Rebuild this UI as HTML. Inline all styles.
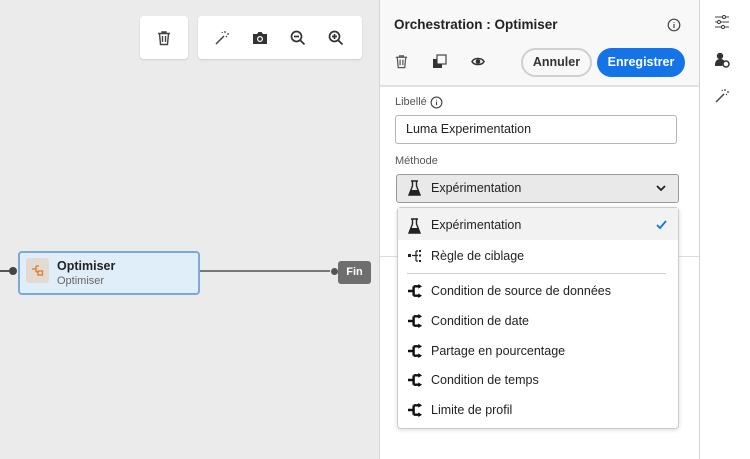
<!DOCTYPE html>
<html><head><style>
*{margin:0;padding:0;box-sizing:border-box}
body{width:750px;height:459px;overflow:hidden;background:#ebebeb;font-family:"Liberation Sans",sans-serif;color:#2c2c2c;position:relative}
.a{position:absolute}
.box{position:absolute;background:#fff;border-radius:4px;box-shadow:0 1px 2px rgba(0,0,0,.12)}
.t{position:absolute;white-space:nowrap}
.item{position:absolute;left:431px;font-size:12.5px;color:#222}
</style></head><body>
<div class="box" style="left:140px;top:16px;width:48px;height:43px"></div>
<div class="box" style="left:198px;top:16px;width:164px;height:43px"></div>
<svg class="a" style="left:156px;top:30px" width="16" height="16" viewBox="0 0 16 16" fill="none" stroke="#444" stroke-width="1.4"><path d="M2 3.5h12M6 3.5V2h4v1.5M3.5 3.5l1 11h7l1-11M6.5 6v6M9.5 6v6"/></svg>
<svg class="a" style="left:214px;top:30px" width="16" height="16" viewBox="0 0 16 16" fill="none" stroke="#444" stroke-width="1.5"><path d="M2 14L10 6"/><path d="M11 1v2M13 4h2M12 6l1 1M8 2l.5 1" stroke-width="1.2"/></svg>
<svg class="a" style="left:252px;top:30px" width="16" height="16" viewBox="0 0 16 16"><path d="M1 4h4l1.5-2h3L11 4h4v10H1z" fill="#333"/><circle cx="8" cy="9" r="3" fill="#fff"/><circle cx="8" cy="9" r="1.8" fill="#333"/></svg>
<svg class="a" style="left:290px;top:30px" width="16" height="16" viewBox="0 0 16 16" fill="none" stroke="#333" stroke-width="1.7"><circle cx="6.5" cy="6.5" r="5"/><path d="M10 10l4.5 4.5M4 6.5h5"/></svg>
<svg class="a" style="left:328px;top:30px" width="16" height="16" viewBox="0 0 16 16" fill="none" stroke="#333" stroke-width="1.7"><circle cx="6.5" cy="6.5" r="5"/><path d="M10 10l4.5 4.5M4 6.5h5M6.5 4v5"/></svg>
<div class="a" style="left:0;top:270px;width:12px;height:1.5px;background:#555"></div>
<div class="a" style="left:199px;top:270px;width:135px;height:1.5px;background:#777"></div>
<div class="a" style="left:18px;top:251px;width:182px;height:44px;background:#e0eefa;border:2px solid #7aa9dd;border-radius:4px"></div>
<div class="a" style="left:9px;top:267px;width:8px;height:8px;border-radius:50%;background:#444"></div>
<div class="a" style="left:26px;top:258px;width:23px;height:25px;background:#e3dbd2;border-radius:3px"></div>
<svg class="a" style="left:31px;top:264px" width="13" height="13" viewBox="0 0 13 13" fill="none" stroke="#e07a2a" stroke-width="1.3"><path d="M1 5h4M5 2v6M5 2h3M5 8h2"/><rect x="7" y="7" width="4.5" height="4" /></svg>
<div class="t" style="left:57px;top:259px;font-size:12.5px;font-weight:bold;color:#222">Optimiser</div>
<div class="t" style="left:57px;top:275px;font-size:11px;color:#666">Optimiser</div>
<div class="a" style="left:330px;top:267px;width:9px;height:9px;border-radius:50%;background:#555;border:1px solid #ebebeb"></div>
<div class="a" style="left:338px;top:261px;width:33px;height:23px;background:#6e6e6e;border-radius:3px;color:#fff;font-size:11px;font-weight:bold;text-align:center;line-height:23px">Fin</div>
<div class="a" style="left:379px;top:0;width:321px;height:459px;background:#fff;border-left:1px solid #d5d5d5"></div>
<div class="a" style="left:380px;top:0;width:320px;height:87px;background:#f8f8f8;border-bottom:2px solid #e1e1e1"></div>
<div class="t" style="left:394px;top:17px;font-size:13.5px;font-weight:bold;color:#222">Orchestration : Optimiser</div>
<svg class="a" style="left:667px;top:18px" width="14" height="14" viewBox="0 0 14 14" fill="none" stroke="#444" stroke-width="1.2"><circle cx="7" cy="7" r="5.8"/><path d="M7 6v4M7 4v.8"/></svg>
<svg class="a" style="left:394px;top:54px" width="15" height="15" viewBox="0 0 16 16" fill="none" stroke="#555" stroke-width="1.3"><path d="M2 3.5h12M6 3.5V2h4v1.5M3.5 3.5l1 11h7l1-11M6.5 6v6M9.5 6v6"/></svg>
<svg class="a" style="left:432px;top:54px" width="15" height="15" viewBox="0 0 15 15"><rect x="5" y="1" width="9" height="9" fill="none" stroke="#444" stroke-width="1.2"/><path d="M1 5h4v5h5v4H1z" fill="#333"/></svg>
<svg class="a" style="left:471px;top:56px" width="14" height="11" viewBox="0 0 14 11" fill="none" stroke="#333" stroke-width="1.5"><path d="M1 5.5C3 1.5 11 1.5 13 5.5C11 9.5 3 9.5 1 5.5z"/><circle cx="7" cy="5.5" r="1.6" fill="#333"/></svg>
<div class="a" style="left:521px;top:48px;width:71px;height:29px;border:2px solid #d0d0d0;border-radius:15px;background:#f8f8f8;font-size:12.5px;font-weight:bold;text-align:center;line-height:25px;color:#333">Annuler</div>
<div class="a" style="left:597px;top:48px;width:88px;height:29px;background:#1473e6;border-radius:15px;font-size:12.5px;font-weight:bold;color:#fff;text-align:center;line-height:29px">Enregistrer</div>
<div class="t" style="left:395px;top:96px;font-size:11px;color:#555">Libellé</div>
<svg class="a" style="left:430px;top:96px" width="13" height="13" viewBox="0 0 14 14" fill="none" stroke="#444" stroke-width="1.2"><circle cx="7" cy="7" r="5.8"/><path d="M7 6v4M7 4v.8"/></svg>
<div class="a" style="left:395px;top:115px;width:282px;height:29px;border:1px solid #b5b5b5;border-radius:3px;background:#fff;font-size:12.5px;padding-left:10px;line-height:27px;color:#222">Luma Experimentation</div>
<div class="t" style="left:395px;top:155px;font-size:11px;color:#555">Méthode</div>
<div class="a" style="left:396px;top:174px;width:283px;height:29px;border:1px solid #999;border-radius:3px;background:#e9e9e9"></div>
<svg class="a" style="left:408px;top:180px" width="13" height="16" viewBox="0 0 13 16"><path d="M3 1h7M4.5 1v5L1 15h11L8.5 6V1" fill="none" stroke="#222" stroke-width="1.4"/><path d="M3 10h7l2 5H1z" fill="#222"/></svg>
<div class="t" style="left:431px;top:181px;font-size:12.5px;color:#222">Expérimentation</div>
<svg class="a" style="left:656px;top:184px" width="10" height="8" viewBox="0 0 10 8" fill="none" stroke="#222" stroke-width="1.8"><path d="M1 2l4 4 4-4"/></svg>
<div class="a" style="left:380px;top:256px;width:320px;height:1px;background:#ddd"></div>
<div class="a" style="left:397px;top:207px;width:282px;height:222px;background:#fff;border:1px solid #ccc;border-radius:4px;box-shadow:0 1px 4px rgba(0,0,0,.15)"></div>
<div class="a" style="left:398px;top:208px;width:280px;height:32px;background:#f2f2f2"></div>
<svg class="a" style="left:408px;top:218px" width="13" height="16" viewBox="0 0 13 16"><path d="M3 1h7M4.5 1v5L1 15h11L8.5 6V1" fill="none" stroke="#222" stroke-width="1.4"/><path d="M3 10h7l2 5H1z" fill="#222"/></svg>
<div class="item" style="top:218px">Expérimentation</div>
<svg class="a" style="left:656px;top:220px" width="11" height="10" viewBox="0 0 11 10" fill="none" stroke="#1473e6" stroke-width="1.8"><path d="M1 5l3 3 6-7"/></svg>
<svg class="a" style="left:408px;top:250px" width="16" height="12" viewBox="0 0 16 12" fill="#222"><rect x="0" y="4" width="3" height="3"/><path d="M4 5.5h4M8 1v10M8 1h2M8 5.5h2M8 11h2" stroke="#222" stroke-width="1.2" fill="none"/><rect x="11" y="0" width="2" height="2"/><rect x="11" y="4.5" width="2" height="2"/><rect x="11" y="10" width="2" height="2"/></svg>
<div class="item" style="top:249px">Règle de ciblage</div>
<div class="a" style="left:407px;top:273px;width:259px;height:1px;background:#ccc"></div>
<svg width="0" height="0" style="position:absolute"><defs><symbol id="br" viewBox="0 0 16 14"><path d="M0 7h6M6 2v10M6 2h6M6 12h6" stroke="#111" stroke-width="2.6" fill="none"/><path d="M11 -0.5l4 2.5-4 2.5zM11 9.5l4 2.5-4 2.5z" fill="#111"/></symbol></defs></svg>
<svg class="a" style="left:408px;top:284px" width="15" height="14"><use href="#br"/></svg>
<div class="item" style="top:284px">Condition de source de données</div>
<svg class="a" style="left:408px;top:314px" width="15" height="14"><use href="#br"/></svg>
<div class="item" style="top:314px">Condition de date</div>
<svg class="a" style="left:408px;top:344px" width="15" height="14"><use href="#br"/></svg>
<div class="item" style="top:344px">Partage en pourcentage</div>
<svg class="a" style="left:408px;top:373px" width="15" height="14"><use href="#br"/></svg>
<div class="item" style="top:373px">Condition de temps</div>
<svg class="a" style="left:408px;top:403px" width="15" height="14"><use href="#br"/></svg>
<div class="item" style="top:403px">Limite de profil</div>
<div class="a" style="left:699px;top:0;width:51px;height:459px;background:#fff;border-left:1px solid #d5d5d5"></div>
<svg class="a" style="left:714px;top:15px" width="16" height="14" viewBox="0 0 16 14" fill="none" stroke="#444" stroke-width="1.1"><path d="M1 2h14M1 7h14M1 12h14"/><circle cx="10" cy="2" r="1.6" fill="#fff"/><circle cx="5" cy="7" r="1.6" fill="#fff"/><circle cx="9" cy="12" r="1.6" fill="#fff"/></svg>
<svg class="a" style="left:714px;top:52px" width="16" height="16" viewBox="0 0 16 16"><circle cx="6" cy="4" r="3.2" fill="#333"/><path d="M1 13c0-4 2-6 5-6s4 1 4.5 3L8 14H1z" fill="#333"/><circle cx="12" cy="12" r="3" fill="none" stroke="#333" stroke-width="1.5"/></svg>
<svg class="a" style="left:714px;top:88px" width="16" height="16" viewBox="0 0 16 16" fill="none" stroke="#444" stroke-width="1.5"><path d="M2 14L10 6"/><path d="M11 1v2M13 4h2M12 6l1 1M8 2l.5 1" stroke-width="1.2"/></svg>
</body></html>
